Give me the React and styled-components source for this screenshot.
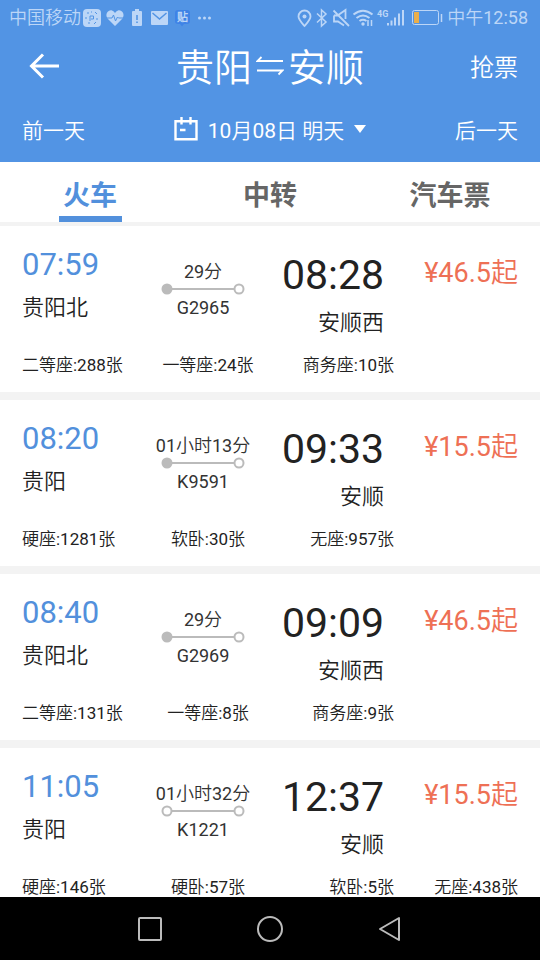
import React from 'react';
import styled, { createGlobalStyle } from 'styled-components';

const GlobalStyle = createGlobalStyle`
    * {
        box-sizing: border-box;
    }
    body {
        margin: 0;
        background: #fff;
        color: #222;
        font-family: Roboto, "Noto Sans CJK SC DemiLight", "Noto Sans CJK SC", sans-serif;
    }
    button {
        padding: 0;
        border: 0;
        background: none;
        color: inherit;
        font: inherit;
        cursor: pointer;
    }
    svg {
        display: block;
        flex: none;
    }
`;

const Page = styled.div`
    display: flex;
    flex-direction: column;
    height: 100vh;
`;

const Header = styled.header`
    flex: none;
    background: #5294e4;
    color: #fff;
`;

const StatusBar = styled.div`
    display: flex;
    justify-content: space-between;
    align-items: center;
    height: 36px;
    padding: 0 12px 0 9px;
    color: #bcd6f7;
    font-size: 18px;
    line-height: 24px;
    white-space: nowrap;
`;

const StatusGroup = styled.div`
    display: flex;
    align-items: center;
    gap: ${props => props.$gap};
`;

const TitleRow = styled.div`
    display: grid;
    grid-template-columns: 1fr auto 1fr;
    align-items: center;
    height: 64px;
    padding: 0 22px;
    font-size: 24px;
`;

const BackButton = styled.button`
    justify-self: start;
    margin: 0 0 4px 7px;
`;

const Title = styled.h1`
    display: flex;
    align-items: center;
    gap: 4px;
    margin: 0;
    font-size: 38px;
    font-weight: 400;
    line-height: 48px;

    svg {
        margin-bottom: 4px;
    }
`;

const TextButton = styled.button`
    justify-self: end;
    line-height: 32px;
`;

const DateRow = styled.div`
    display: flex;
    justify-content: space-between;
    align-items: center;
    height: 62px;
    padding: 0 22px;
    font-size: 21px;
`;

const DateButton = styled.button`
    display: flex;
    align-items: center;
    gap: 10px;
    line-height: 32px;

    svg {
        margin-bottom: 4px;
    }
`;

const Tabs = styled.nav`
    display: grid;
    grid-template-columns: repeat(3, 1fr);
    flex: none;
    height: 60px;
`;

const Tab = styled.button`
    display: flex;
    flex-direction: column;
    align-items: center;
    justify-content: space-between;
    padding-top: 12px;
    color: ${props => (props.$active ? '#5290dc' : '#666')};
    font-family: "Noto Sans CJK SC", sans-serif;
    font-size: 27px;
    font-weight: 700;
    line-height: 40px;

    &::after {
        content: '';
        width: 63px;
        height: 6px;
        background: ${props => (props.$active ? '#5290dc' : 'transparent')};
    }
`;

const List = styled.main`
    flex: 1;
    min-height: 0;
    padding-top: 4px;
    overflow: hidden;
    background: #f3f3f3;
`;

const Card = styled.article`
    margin-bottom: 8px;
    padding: 19px 22px 15px;
    background: #fff;
`;

const Trip = styled.div`
    display: grid;
    grid-template-columns: 1fr 96px 1fr 134px;
    height: 108px;
    white-space: nowrap;
`;

const Station = styled.div`
    font-size: 22px;
    line-height: 32px;
`;

const Departure = styled.div`
    time {
        display: block;
        margin-bottom: 7px;
        color: #5290dc;
        font-size: 31px;
        line-height: 40px;
    }
`;

const Arrival = styled.div`
    padding-top: 6px;
    text-align: right;

    time {
        display: block;
        margin-bottom: 8px;
        font-size: 41px;
        line-height: 48px;
    }
`;

const Journey = styled.div`
    display: flex;
    flex-direction: column;
    align-items: center;
    padding-top: 16px;
    color: #333;
    font-size: 18px;
    line-height: 22px;

    svg {
        margin-bottom: 2px;
    }
`;

const Price = styled.div`
    padding-top: 12px;
    color: #ee7055;
    font-size: 27px;
    line-height: 32px;
    text-align: right;
`;

const Seats = styled.ul`
    display: grid;
    grid-template-columns: repeat(4, 1fr);
    margin: 0;
    padding: 0;
    list-style: none;
    font-size: 17px;
    line-height: 24px;
    text-align: right;
    white-space: nowrap;

    li:nth-child(1) {
        text-align: left;
    }
    li:nth-child(2) {
        text-align: center;
    }
`;

const SystemNav = styled.footer`
    display: flex;
    justify-content: center;
    align-items: center;
    gap: 92px;
    flex: none;
    height: 63px;
    background: #000;
`;

const trains = [
  {
    number: 'G2965', start: '07:59', end: '08:28', from: '贵阳北', to: '安顺西', duration: '29分', price: '46.5', origin: true,
    seats: ['二等座:288张', '一等座:24张', '商务座:10张'],
  },
  {
    number: 'K9591', start: '08:20', end: '09:33', from: '贵阳', to: '安顺', duration: '01小时13分', price: '15.5', origin: true,
    seats: ['硬座:1281张', '软卧:30张', '无座:957张'],
  },
  {
    number: 'G2969', start: '08:40', end: '09:09', from: '贵阳北', to: '安顺西', duration: '29分', price: '46.5', origin: true,
    seats: ['二等座:131张', '一等座:8张', '商务座:9张'],
  },
  {
    number: 'K1221', start: '11:05', end: '12:37', from: '贵阳', to: '安顺', duration: '01小时32分', price: '15.5', origin: false,
    seats: ['硬座:146张', '硬卧:57张', '软卧:5张', '无座:438张'],
  },
];

const LeftIcons = () => (
  <svg width="130" height="20" viewBox="82 8 130 20" fill="#bcd6f7" aria-hidden="true">
    <rect x="83" y="9" width="18" height="18" rx="4" />
    <g fill="none" stroke="#5294e4" strokeWidth="1">
      <path d="M90 21v-5h3.5v3H91M87 13h2M95 12l2 2M86 17v2M97 18v2M88 23h2M94 24l2-2M91 12h1" />
    </g>
    <path d="M115 26 107.500 18.500C104.500 14 108.500 9.500 112 10.500Q114 11 115 13Q116 11 118 10.500C121.500 9.500 125.500 14 122.500 18.500Z" />
    <path d="M106 18h6l1.500-3 2 6 2-4 1 1h6" fill="none" stroke="#5294e4" />
    <path d="M135 9h4v2h2q1 0 1 1v13q0 1-1 1h-8q-1 0-1-1V12q0-1 1-1h2z" />
    <path d="M136.200 15h1.600v5h-1.600zM136.200 21.500h1.600v1.600h-1.600z" fill="#5294e4" />
    <rect x="151" y="11" width="17" height="14" rx="1" />
    <path d="M152.500 13 159.500 19 166.500 13" fill="none" stroke="#5294e4" strokeWidth="1.500" />
    <rect x="175" y="10" width="15" height="14" rx="3" fill="#3f83e6" />
    <path d="M180 24h4l-2 2.500z" fill="#3f83e6" />
    <text x="177" y="21" fontSize="11" fontWeight="700">贴</text>
    <circle cx="199.500" cy="18" r="1.500" />
    <circle cx="204.500" cy="18" r="1.500" />
    <circle cx="209.500" cy="18" r="1.500" />
  </svg>
);

const RightIcons = () => (
  <svg width="146" height="20" viewBox="297 8 146 20" fill="none" stroke="#bcd6f7" strokeWidth="1.500" aria-hidden="true">
    <path d="M304.500 26C301 22 298.500 19.500 298.500 16.500a6 6 0 0 1 12 0C310.500 19.500 308 22 304.500 26Z" strokeWidth="1.800" />
    <circle cx="304.500" cy="16.500" r="2" fill="#bcd6f7" stroke="none" />
    <path d="M317 13.500 326 22 321.500 26V10L326 14 317 22.500" />
    <path d="M333.500 10.500 349 26M334 15.500h3.500L345.500 10v9M334 15.500v6h4l6 4" strokeWidth="1.800" />
    <path d="M353.500 14.500q9.500-7.500 19 0M356.500 18q6.500-5 13 0M359.500 21q3.500-2.500 7 0" strokeWidth="2" />
    <circle cx="363" cy="24" r="1.700" fill="#bcd6f7" stroke="none" />
    <path d="M368 20v6M371.500 20v6" />
    <text x="377" y="17" fontSize="9" fontWeight="700" fill="#bcd6f7" stroke="none">4G</text>
    <path d="M388 25.500v-2.500M391.500 25.500v-5M395 25.500v-8M399 25.500v-12M403 25.500v-15.500" strokeWidth="2" />
    <rect x="412.500" y="10.500" width="26" height="14" rx="2" strokeWidth="1" />
    <path d="M441.500 14v8" />
    <rect x="414" y="12" width="5" height="11" fill="#e9ae4b" stroke="none" />
  </svg>
);

const RouteLine = ({ origin }) => (
  <svg width="84" height="12" viewBox="0 0 84 12" fill="#fff" stroke="#bbb" strokeWidth="2" aria-hidden="true">
    <path d="M10 6h64" />
    <circle cx="6" cy="6" r="4.500" fill={origin ? '#bbb' : '#fff'} />
    <circle cx="78" cy="6" r="4.500" />
  </svg>
);

const Train = ({ train }) => (
  <Card>
    <Trip>
      <Departure>
        <time>{train.start}</time>
        <Station>{train.from}</Station>
      </Departure>
      <Journey>
        <span>{train.duration}</span>
        <RouteLine origin={train.origin} />
        <span>{train.number}</span>
      </Journey>
      <Arrival>
        <time>{train.end}</time>
        <Station>{train.to}</Station>
      </Arrival>
      <Price>¥{train.price}起</Price>
    </Trip>
    <Seats>
      {train.seats.map(seat => <li key={seat}>{seat}</li>)}
    </Seats>
  </Card>
);

const App = () => (
  <Page>
    <GlobalStyle />
    <Header>
      <StatusBar>
        <StatusGroup $gap="1px">
          <span>中国移动</span>
          <LeftIcons />
        </StatusGroup>
        <StatusGroup $gap="4px">
          <RightIcons />
          <span>中午12:58</span>
        </StatusGroup>
      </StatusBar>
      <TitleRow>
        <BackButton aria-label="返回">
          <svg width="31" height="26" viewBox="0 0 31 26" fill="none" stroke="#fff" strokeWidth="3">
            <path d="M14 1.500 2.500 13 14 24.500M2.500 13H30" />
          </svg>
        </BackButton>
        <Title>
          <span>贵阳</span>
          <svg width="28" height="20" viewBox="0 0 28 20" fill="none" stroke="#fff" strokeWidth="1.800" aria-hidden="true">
            <path d="M5.500 1 1.500 5H27M1 14.500H26.500L22.500 18.500" />
          </svg>
          <span>安顺</span>
        </Title>
        <TextButton>抢票</TextButton>
      </TitleRow>
      <DateRow>
        <TextButton>前一天</TextButton>
        <DateButton>
          <svg width="24" height="24" viewBox="0 0 24 24" fill="none" stroke="#fff" strokeWidth="2.400" aria-hidden="true">
            <path d="M1.500 4.200h21v18h-21zM7.500 0v7.500M16.500 0v7.500M6 13h5.500" />
          </svg>
          <span>10月08日 明天</span>
          <svg width="12" height="8" viewBox="0 0 12 8" fill="#fff" aria-hidden="true">
            <path d="M0 0h12L6 8z" />
          </svg>
        </DateButton>
        <TextButton>后一天</TextButton>
      </DateRow>
    </Header>
    <Tabs>
      <Tab $active>火车</Tab>
      <Tab>中转</Tab>
      <Tab>汽车票</Tab>
    </Tabs>
    <List>
      {trains.map(train => <Train key={train.number} train={train} />)}
    </List>
    <SystemNav>
      <button aria-label="最近任务">
        <svg width="28" height="28" viewBox="0 0 28 28" fill="none" stroke="#bbb" strokeWidth="2">
          <rect x="3" y="3" width="22" height="22" rx="1" />
        </svg>
      </button>
      <button aria-label="主屏幕">
        <svg width="28" height="28" viewBox="0 0 28 28" fill="none" stroke="#bbb" strokeWidth="2">
          <circle cx="14" cy="14" r="12" />
        </svg>
      </button>
      <button aria-label="后退">
        <svg width="28" height="28" viewBox="0 0 28 28" fill="none" stroke="#bbb" strokeWidth="2" strokeLinejoin="round">
          <path d="M23 3v22L4 14z" />
        </svg>
      </button>
    </SystemNav>
  </Page>
);

export default App;
